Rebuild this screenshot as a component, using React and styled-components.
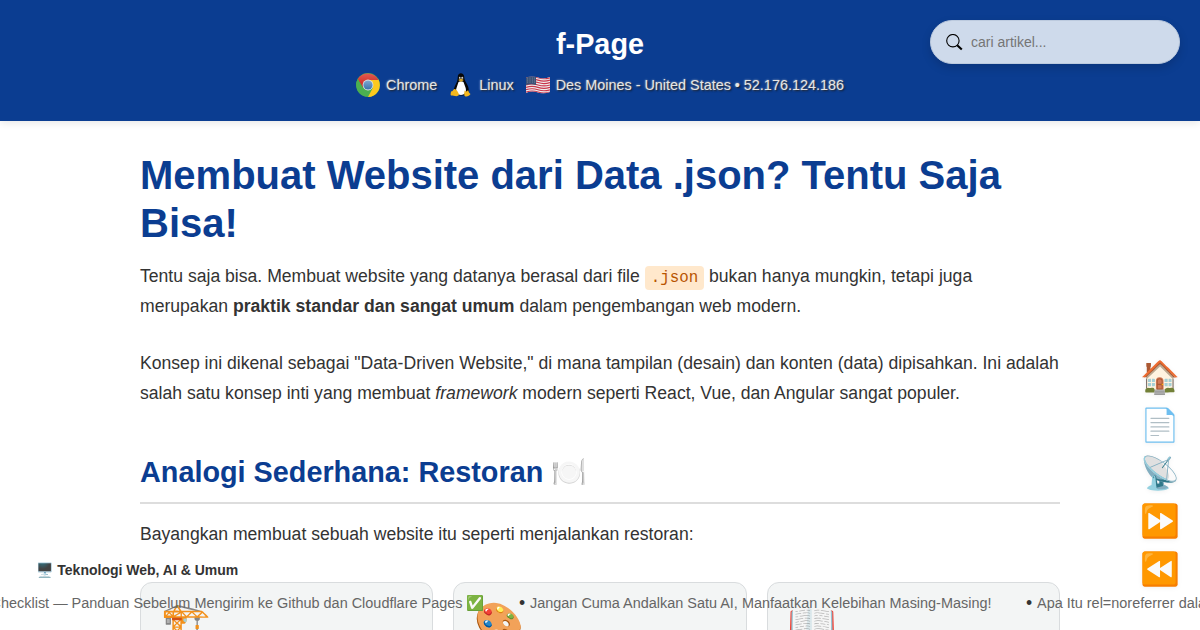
import React from "react";
import styled, { createGlobalStyle } from "styled-components";

const GlobalStyle = createGlobalStyle`
  *, *::before, *::after { box-sizing: border-box; }
  html, body { margin: 0; height: 630px; overflow: hidden; }
  body {
    background: #fff;
    color: #333;
    font-family: "Liberation Sans", "Noto Color Emoji", sans-serif;
    font-size: 17.6px;
    line-height: 1.7;
  }
`;

const Page = styled.div`
  height: 630px;
  overflow: hidden;
  position: relative;
`;

const Header = styled.header`
  height: 121px;
  padding-top: 27px;
  background: #0b3d91;
  box-shadow: 0 2px 8px rgba(0, 0, 0, 0.1);
  display: flex;
  flex-direction: column;
  align-items: center;
  position: relative;
`;

const SiteTitle = styled.div`
  color: #fff;
  font-size: 28.8px;
  line-height: 34px;
  font-weight: 700;
`;

const Visitor = styled.div`
  display: flex;
  align-items: center;
  gap: 12px;
  height: 24px;
  margin-top: 12px;
`;

const VisitorItem = styled.span`
  display: flex;
  align-items: center;
  gap: 6px;
  color: #e6e6e6;
  font-size: 14.4px;
  line-height: 24px;
  white-space: nowrap;
  text-shadow: 1px 1px 2px rgba(0, 0, 0, 0.9), 0 0 2px rgba(255, 255, 255, 0.8);
  svg { display: block; flex: none; }
`;

const Search = styled.label`
  position: absolute;
  top: 20px;
  right: 20px;
  width: 250px;
  height: 44px;
  padding: 0 15px;
  display: flex;
  align-items: center;
  gap: 8px;
  border-radius: 22px;
  border: 1px solid #bccade;
  background: #cedaeb;
  box-shadow: 0 4px 10px rgba(0, 0, 0, 0.15);
`;

const SearchInput = styled.input`
  flex: 1;
  min-width: 0;
  border: 0;
  padding: 0;
  outline: 0;
  background: transparent;
  font: 14px "Liberation Sans", sans-serif;
  &::placeholder { color: #757575; opacity: 1; }
`;

const Article = styled.main`
  width: 920px;
  margin: 0 auto;
  padding-top: 30px;
`;

const Title = styled.h1`
  margin: 0 0 14px;
  color: #0b3d91;
  font-size: 40px;
  line-height: 48px;
`;

const Paragraph = styled.p`
  margin: 0 0 27px;
  line-height: 30px;
`;

const Code = styled.code`
  padding: 3px 6px;
  border-radius: 4px;
  background: #ffe8cc;
  color: #b85400;
  font-family: "Liberation Mono", monospace;
  font-size: 15.84px;
  line-height: 1;
`;

const Heading = styled.h2`
  margin: 47px 0 15px;
  padding-bottom: 12px;
  border-bottom: 2px solid #ddd;
  color: #0b3d91;
  font-size: 28.8px;
  line-height: 35px;
`;

const Cards = styled.div`
  display: grid;
  grid-template-columns: repeat(3, 1fr);
  gap: 20px;
  margin-top: 33px;
`;

const Card = styled.div`
  height: 220px;
  padding: 18px 20px;
  border: 1px solid #d9dcde;
  border-radius: 12px;
  background: #f3f5f5;
  font-size: 40px;
  line-height: 44px;
`;

const SideNav = styled.nav`
  position: absolute;
  right: 20px;
  top: 353px;
  display: flex;
  flex-direction: column;
`;

const NavIcon = styled.a`
  width: 40px;
  height: 48px;
  display: flex;
  align-items: center;
  justify-content: center;
  font-size: 32px;
  line-height: 48px;
  filter: drop-shadow(0 1px 2px rgba(0, 0, 0, 0.06));
`;

const Category = styled.div`
  position: absolute;
  left: 36px;
  top: 558px;
  font-size: 14px;
  line-height: 24px;
  font-weight: 700;
  white-space: pre;
`;

const Ticker = styled.div`
  position: absolute;
  left: -20.5px;
  top: 591px;
  display: flex;
  gap: 34.5px;
  font-size: 17.6px;
  line-height: 24px;
  white-space: pre;
`;

const TickerItem = styled.span`
  display: flex;
  color: #333;
  a { color: #666; font-size: 14.45px; }
`;

const ChromeLogo = () => (
  <svg width="24" height="24" viewBox="0 0 48 48">
    <defs>
      <linearGradient id="chrome-red" x1="0" y1="0" x2="0" y2="1">
        <stop stopColor="#e05a50" /><stop offset="1" stopColor="#c8201c" />
      </linearGradient>
      <linearGradient id="chrome-blue" x1="0" y1="0" x2="0" y2="1">
        <stop stopColor="#7fa9cf" /><stop offset="1" stopColor="#3a72ae" />
      </linearGradient>
    </defs>
    <circle cx="24" cy="24" r="23.8" fill="#4baf50" />
    <path d="M24 13h21A24 24 0 0 1 24 48L34 29Z" fill="#fbc91e" />
    <path d="M3.4 12A24 24 0 0 1 45 14H24L14 30Z" fill="url(#chrome-red)" />
    <path d="M3.4 12 14.5 30A11 11 0 0 0 24 35L19 47A24 24 0 0 1 3.4 12Z" fill="#4baf50" />
    <circle cx="24" cy="24" r="10.8" fill="#dfe6e8" />
    <circle cx="24" cy="24" r="9.2" fill="url(#chrome-blue)" />
  </svg>
);

const Tux = () => (
  <svg width="24" height="24" viewBox="0 0 48 48">
    <path d="M17.5 8c0-10 12.5-10 13 0 0 9 9 15 9 26 0 8-7 11-16 11S8 42 9.500 34c1-9 8-14 8-26Z" fill="#080808" />
    <path d="M19 18c3-2 7-2 10 0l4 11c3 9-2 15-9 15s-12-6-9-14Z" fill="#fff" />
    <ellipse cx="21.500" cy="10" rx="1.7" ry="2.4" fill="#ddd" />
    <ellipse cx="26.500" cy="10" rx="2" ry="2.6" fill="#ddd" />
    <circle cx="22" cy="10.5" r="1" /><circle cx="26" cy="10.5" r="1" />
    <path d="m18.500 14 5.500-3 5.500 3-5.500 4Z" fill="#d6a52a" />
    <path d="M11 32c4 0 8 7 9 11-2 6-10 2-16 2-2-2 0-5 0-8 4 0 4-4 7-5Z" fill="#f5b81e" />
    <path d="M31 35c3 4 6 1 7-1 2 4 1 5 5 8-2 3-6 6-10 5-4-2-2-8-2-12Z" fill="#f5b81e" />
  </svg>
);

const Flag = () => (
  <svg width="24" height="24" viewBox="0 0 48 48">
    <clipPath id="flag-cloth">
      <path d="M0 9Q12 5 24 9T48 8V38Q36 43 24 39T0 40Z" />
    </clipPath>
    <g clipPath="url(#flag-cloth)">
      <path d="M0 5H48V43H0Z" fill="#f0eeee" />
      {[0, 1, 2, 3, 4, 5, 6].map((i) => (
        <path key={i} d={`M0 ${9.5 + i * 4.8}q12-4 24 0t24 0`} fill="none" stroke="#c9354b" strokeWidth="2.4" />
      ))}
      <path d="M0 5H20V24Q10 21 0 24Z" fill="#3d5276" />
      {[10, 14, 18].map((y) =>
        [3, 8, 13, 17].map((x) => <circle key={`${x}-${y}`} cx={x} cy={y} r=".8" fill="#a9b6c9" />)
      )}
    </g>
  </svg>
);

const SearchIcon = () => (
  <svg width="17" height="17" viewBox="0 0 17 17" fill="none" stroke="#000">
    <circle cx="6.9" cy="6.7" r="6.2" strokeWidth="1.1" />
    <path d="m11.200 11.200 4.600 4.400" strokeWidth="2.1" />
  </svg>
);

const cardIcons = ["🏗️", "🎨", "📖"];
const navIcons = ["🏠", "📄", "📡", "⏩", "⏪"];
const headlines = [
  "Checklist — Panduan Sebelum Mengirim ke Github dan Cloudflare Pages ✅",
  "Jangan Cuma Andalkan Satu AI, Manfaatkan Kelebihan Masing-Masing!",
  "Apa Itu rel=noreferrer dalam HTML?",
];

export default function App() {
  return (
    <Page>
      <GlobalStyle />
      <Header>
        <SiteTitle>f-Page</SiteTitle>
        <Visitor>
          <VisitorItem><ChromeLogo />Chrome</VisitorItem>
          <VisitorItem><Tux />Linux</VisitorItem>
          <VisitorItem><Flag />Des Moines - United States • 52.176.124.186</VisitorItem>
        </Visitor>
        <Search>
          <SearchIcon />
          <SearchInput placeholder="cari artikel..." />
        </Search>
      </Header>
      <Article>
        <Title>Membuat Website dari Data .json? Tentu Saja Bisa!</Title>
        <Paragraph>
          Tentu saja bisa. Membuat website yang datanya berasal dari file <Code>.json</Code> bukan hanya
          mungkin, tetapi juga merupakan <strong>praktik standar dan sangat umum</strong> dalam
          pengembangan web modern.
        </Paragraph>
        <Paragraph>
          Konsep ini dikenal sebagai "Data-Driven Website," di mana tampilan (desain) dan konten (data)
          dipisahkan. Ini adalah salah satu konsep inti yang membuat <em>framework</em> modern seperti
          React, Vue, dan Angular sangat populer.
        </Paragraph>
        <Heading>Analogi Sederhana: Restoran 🍽️</Heading>
        <Paragraph>Bayangkan membuat sebuah website itu seperti menjalankan restoran:</Paragraph>
        <Cards>
          {cardIcons.map((icon) => <Card key={icon}>{icon}</Card>)}
        </Cards>
      </Article>
      <SideNav>
        {navIcons.map((icon) => <NavIcon key={icon}>{icon}</NavIcon>)}
      </SideNav>
      <Category>🖥️ Teknologi Web, AI &amp; Umum</Category>
      <Ticker>
        {headlines.map((text) => (
          <TickerItem key={text}>{"• "}<a>{text}</a></TickerItem>
        ))}
      </Ticker>
    </Page>
  );
}
